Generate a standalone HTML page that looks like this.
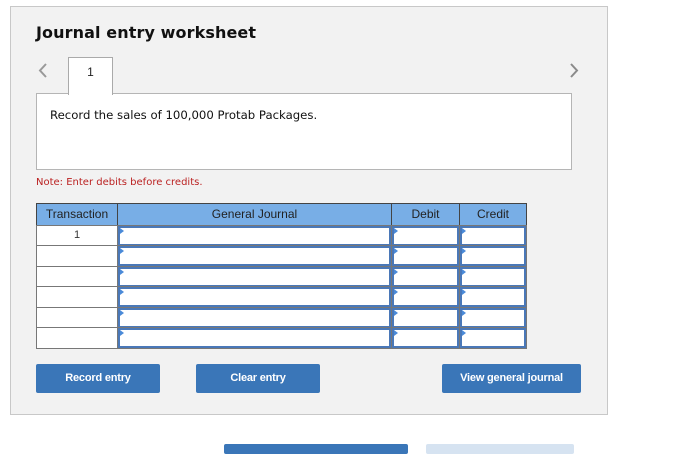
<!DOCTYPE html>
<html><head><style>
*{margin:0;padding:0;box-sizing:border-box}
body{width:677px;height:450px;background:#fff;position:relative;overflow:hidden;font-family:"Liberation Sans",Arial,sans-serif}
.a{position:absolute}
.panel{left:10px;top:6px;width:598px;height:409px;background:#f2f2f2;border:1px solid #c8c8c8}
h1{position:absolute;left:36px;top:23px;font-family:"DejaVu Sans",sans-serif;font-size:16px;font-weight:bold;color:#111;letter-spacing:0.1px}
.tab{left:68px;top:57px;width:45px;height:38px;background:#fff;border:1px solid #aaa;border-bottom:none;z-index:2;text-align:center;font-size:12px;padding-top:7px;color:#222}
.box{left:36px;top:93px;width:536px;height:77px;background:#fff;border:1px solid #b5b5b5}
.box p{position:absolute;left:13px;top:14px;font-family:"DejaVu Sans",sans-serif;font-size:11.7px;color:#111}
.note{left:36px;top:177px;font-family:"DejaVu Sans",sans-serif;font-size:10px;color:#b22}
.hd{top:203px;height:23px;background:#78aee6;border:1px solid #444;font-size:12px;color:#222;text-align:center;line-height:21px}
.cell{background:#fff;border:1px solid #777}
.inp{background:#fff;border:2px solid #4a78b8}
.inp:before{content:"";position:absolute;left:0;top:0;border-left:4px solid #4a8ad8;border-top:3px solid transparent;border-bottom:3px solid transparent}
.btn{top:364px;height:29px;background:#3a76b8;border-radius:2px;color:#fff;font-weight:bold;font-size:11px;text-align:center;line-height:29px;letter-spacing:-0.2px}
</style></head><body>
<div class="a panel"></div>
<h1>Journal entry worksheet</h1>
<svg class="a" style="left:38px;top:63px" width="10" height="16"><path d="M8 1 L2 7.5 L8 14" stroke="#999" stroke-width="2" fill="none"/></svg>
<svg class="a" style="left:569px;top:63px" width="10" height="16"><path d="M2 1 L8 7.5 L2 14" stroke="#8a8a8a" stroke-width="2" fill="none"/></svg>
<div class="a tab">1</div>
<div class="a box"><p>Record the sales of 100,000 Protab Packages.</p></div>
<div class="a note">Note: Enter debits before credits.</div>
<div class="a hd" style="left:36px;width:82px">Transaction</div>
<div class="a hd" style="left:117px;width:275px">General Journal</div>
<div class="a hd" style="left:391px;width:69px">Debit</div>
<div class="a hd" style="left:459px;width:68px">Credit</div>
<div id="rows"></div>
<script>
var tops=[225,245,266,286,307,327],h=22,s='';
tops.forEach(function(t,i){
s+='<div class="a cell" style="left:36px;top:'+t+'px;width:82px;height:'+h+'px;font-size:11px;text-align:center;line-height:19px;color:#333">'+(i==0?'1':'')+'</div>';
s+='<div class="a" style="left:117px;top:'+t+'px;width:410px;height:'+h+'px;border:1px solid #777;background:#777"></div>';
[[118,273],[392,67],[460,66]].forEach(function(c){
s+='<div class="a inp" style="left:'+c[0]+'px;top:'+(t+1)+'px;width:'+c[1]+'px;height:'+(h-2)+'px"></div>';});
});
document.getElementById('rows').innerHTML=s;
</script>
<div class="a btn" style="left:36px;width:124px">Record entry</div>
<div class="a btn" style="left:196px;width:124px">Clear entry</div>
<div class="a btn" style="left:442px;width:139px">View general journal</div>
<div class="a" style="left:224px;top:444px;width:184px;height:10px;background:#3a76b8;border-radius:2px"></div>
<div class="a" style="left:426px;top:444px;width:148px;height:10px;background:#d6e3f1;border-radius:2px"></div>
</body></html>
